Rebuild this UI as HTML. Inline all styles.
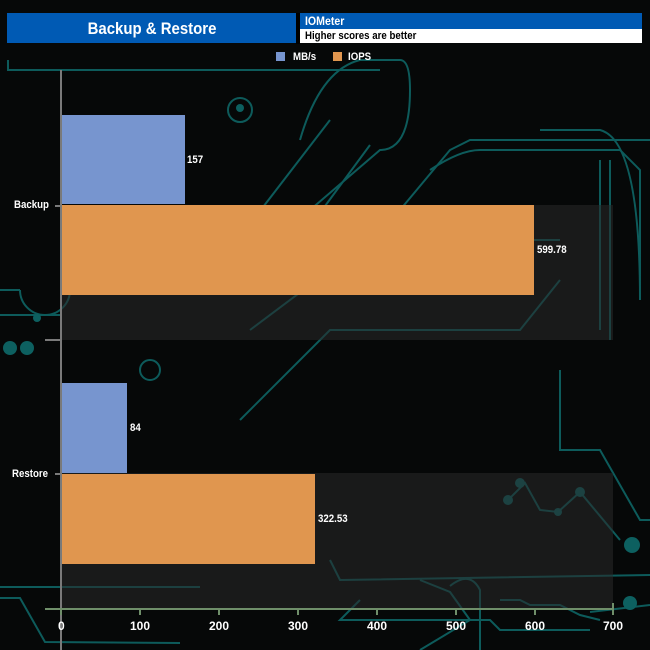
<!DOCTYPE html>
<html><head><meta charset="utf-8"><style>
html,body{margin:0;padding:0;background:#050707;width:650px;height:650px;overflow:hidden;font-family:"Liberation Sans",Arial,sans-serif}
.t{position:absolute;font-weight:bold;color:#fff;transform:scaleX(0.88);transform-origin:0 0;white-space:nowrap}
</style></head><body>
<svg width="650" height="650" style="position:absolute;left:0;top:0">
<rect width="650" height="650" fill="#060808"/>
<g fill="none" stroke="#0d5b5b" stroke-width="2">
<path d="M8 60 L8 70 L380 70"/>
<path d="M300 140 Q320 70 360 60 L400 60 Q410 60 410 90 Q410 150 380 150 L310 210"/>
<path d="M230 250 L330 120"/>
<path d="M370 145 L300 240 M400 210 L450 150 L470 140 L650 140"/>
<path d="M0 315 L60 315 M0 290 L20 290"/>
<path d="M430 170 Q460 150 480 150 L620 150 L640 170 L640 300"/>
<path d="M250 330 L330 270 L460 270 L500 240 L560 240"/>
<path d="M240 420 L330 330 L520 330 L560 280"/>
<path d="M330 560 L340 580 L650 575"/>
<path d="M0 587 L200 587"/>
<path d="M0 598 L20 598 L45 642 L180 643"/>
<path d="M420 580 L450 592 L470 620 L420 650"/>
<path d="M450 586 Q470 570 480 590 L480 650"/>
<path d="M500 600 L520 600 L530 605 L560 605 L580 615 L600 620 M590 612 L650 605"/>
<path d="M360 600 L340 620 L490 620 L500 630 L590 630"/>
<path d="M560 370 L560 450 L600 450 L640 520 L650 520"/>
<path d="M508 500 L525 483 L540 510 L558 512 L580 492 L620 540"/>
<path d="M150 370 m-10 0 a10 10 0 1 0 20 0 a10 10 0 1 0 -20 0"/>
<path d="M240 110 m-12 0 a12 12 0 1 0 24 0 a12 12 0 1 0 -24 0"/>
<path d="M20 290 a25 25 0 1 0 50 0"/>
<path d="M540 130 L600 130 Q640 140 640 300 M600 160 L600 330 M610 160 L610 340"/>
</g>
<g fill="#0d6060">
<circle cx="240" cy="108" r="4"/><circle cx="37" cy="318" r="4"/>
<circle cx="520" cy="483" r="5"/><circle cx="580" cy="492" r="5"/><circle cx="508" cy="500" r="5"/><circle cx="558" cy="512" r="4"/>
<circle cx="632" cy="545" r="8"/><circle cx="630" cy="603" r="7"/><circle cx="10" cy="348" r="7"/><circle cx="27" cy="348" r="7"/>
</g>
<rect x="61" y="205" width="552" height="135" fill="#2a2a2a" opacity="0.55"/>
<rect x="61" y="473" width="552" height="137" fill="#2a2a2a" opacity="0.55"/>
<rect x="62" y="115" width="123" height="89" fill="#7795cf"/>
<rect x="62" y="205" width="472" height="90" fill="#e0964f"/>
<rect x="62" y="383" width="65" height="90" fill="#7795cf"/>
<rect x="62" y="474" width="253" height="90" fill="#e0964f"/>
<line x1="61" y1="70" x2="61" y2="650" stroke="#7a7a7a" stroke-width="2"/>
<line x1="55" y1="206" x2="61" y2="206" stroke="#7a7a7a" stroke-width="2"/>
<line x1="55" y1="474" x2="61" y2="474" stroke="#7a7a7a" stroke-width="2"/>
<line x1="45" y1="340" x2="61" y2="340" stroke="#7a7a7a" stroke-width="2"/>
<line x1="45" y1="609" x2="613" y2="609" stroke="#6f8f6a" stroke-width="2"/>
<g stroke="#6f8f6a" stroke-width="2">
<line x1="61" y1="609" x2="61" y2="615"/><line x1="140" y1="609" x2="140" y2="615"/><line x1="219" y1="609" x2="219" y2="615"/><line x1="298" y1="609" x2="298" y2="615"/><line x1="377" y1="609" x2="377" y2="615"/><line x1="456" y1="609" x2="456" y2="615"/><line x1="535" y1="609" x2="535" y2="615"/><line x1="613" y1="603" x2="613" y2="615"/>
</g>
<rect x="7" y="13" width="290" height="30" fill="#005ab4"/>
<rect x="296" y="13" width="4" height="31" fill="#000"/>
<rect x="300" y="13" width="342" height="16" fill="#005ab4"/>
<rect x="300" y="29" width="342" height="14" fill="#fff"/>
<rect x="276" y="52" width="9" height="9" fill="#7795cf"/>
<rect x="333" y="52" width="9" height="9" fill="#e0964f"/>
</svg>
<div class="t" style="left:152px;top:19px;font-size:17px;transform:translateX(-50%) scaleX(0.88);transform-origin:50% 0">Backup &amp; Restore</div>
<div class="t" style="left:305px;top:14px;font-size:12px">IOMeter</div>
<div class="t" style="left:305px;top:30px;font-size:11px;color:#000">Higher scores are better</div>
<div class="t" style="left:293px;top:51px;font-size:11px">MB/s</div>
<div class="t" style="left:348px;top:51px;font-size:11px">IOPS</div>
<div class="t" style="left:187px;top:154px;font-size:11px">157</div>
<div class="t" style="left:537px;top:244px;font-size:11px">599.78</div>
<div class="t" style="left:130px;top:422px;font-size:11px">84</div>
<div class="t" style="left:318px;top:513px;font-size:11px">322.53</div>
<div class="t" style="left:14px;top:199px;font-size:11px">Backup</div>
<div class="t" style="left:12px;top:468px;font-size:11px">Restore</div>
<div style="position:absolute;top:619px;left:0;width:650px;height:20px;font-weight:bold;color:#fff;font-size:12px">
<span style="position:absolute;left:58px">0</span><span style="position:absolute;left:130px">100</span><span style="position:absolute;left:209px">200</span><span style="position:absolute;left:288px">300</span><span style="position:absolute;left:367px">400</span><span style="position:absolute;left:446px">500</span><span style="position:absolute;left:525px">600</span><span style="position:absolute;left:603px">700</span>
</div>
</body></html>
